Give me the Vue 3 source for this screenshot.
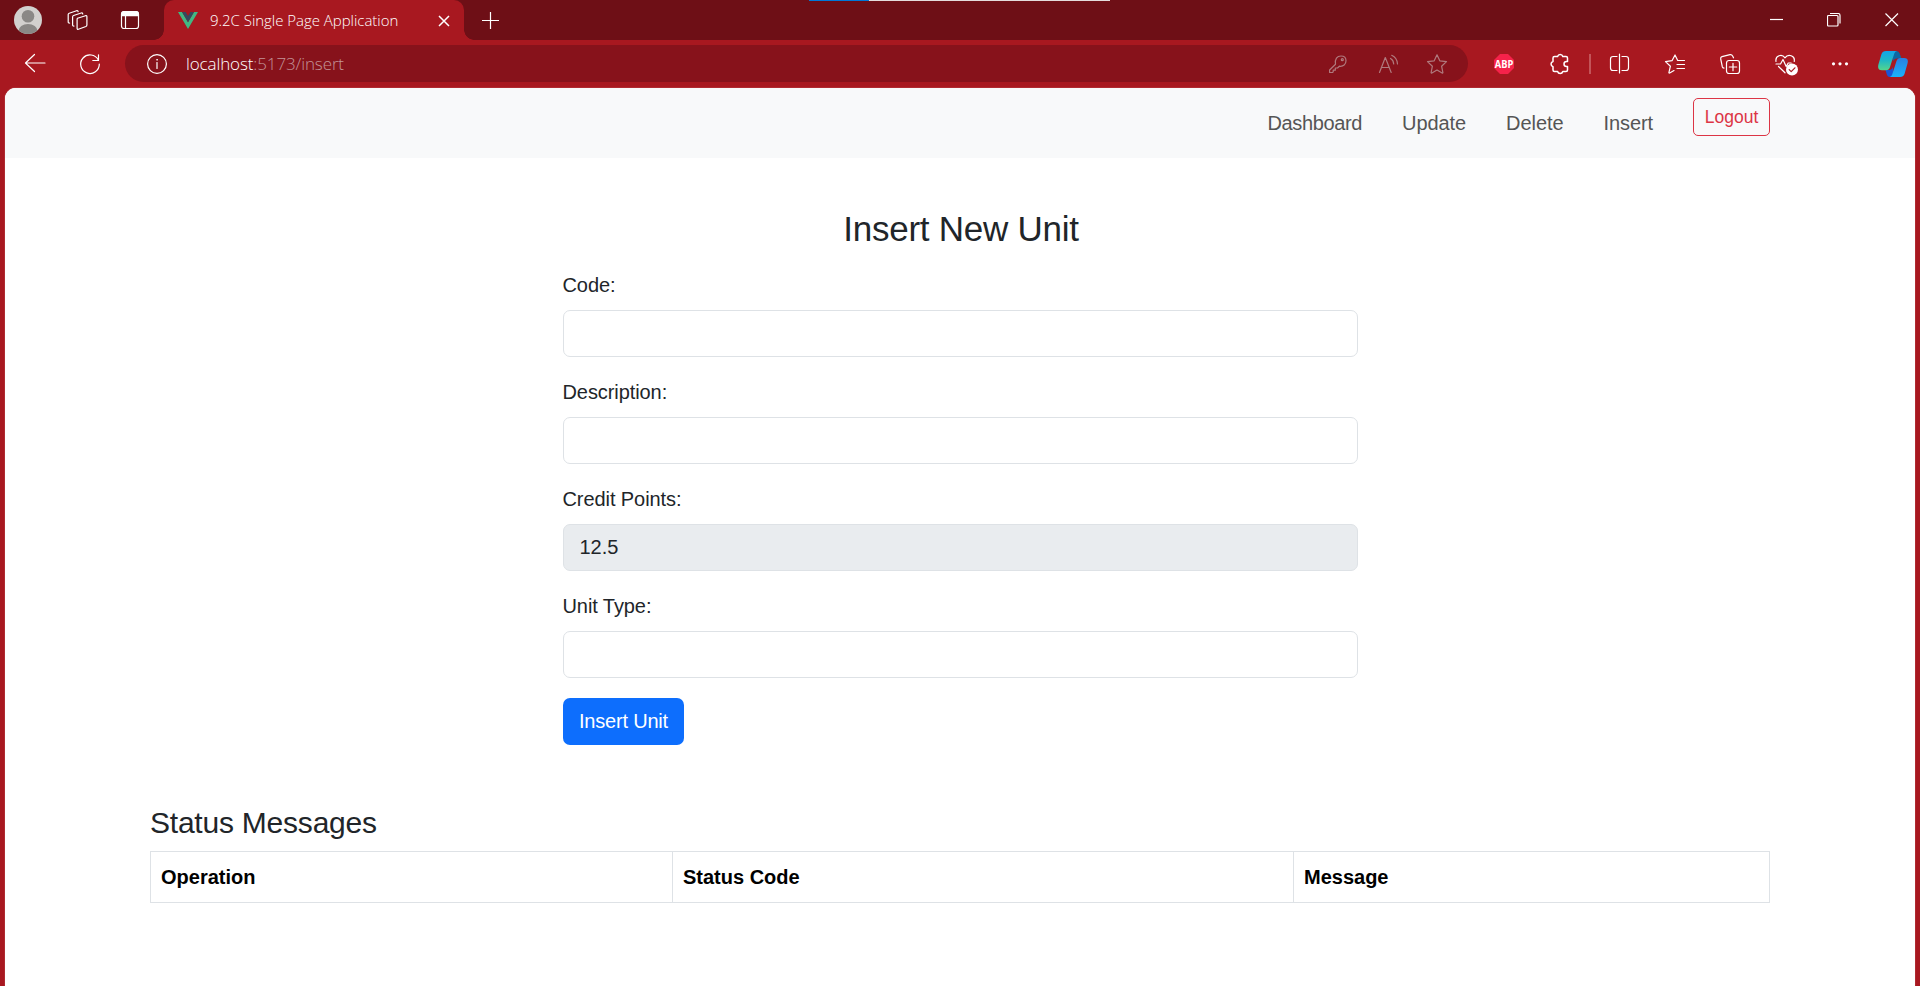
<script setup>
import { ref } from 'vue'

const links = ['Dashboard', 'Update', 'Delete', 'Insert']
const fields = ref([
  { id: 'code', label: 'Code:', value: '', readonly: false },
  { id: 'description', label: 'Description:', value: '', readonly: false },
  { id: 'credit', label: 'Credit Points:', value: '12.5', readonly: true },
  { id: 'type', label: 'Unit Type:', value: '', readonly: false }
])
const columns = ['Operation', 'Status Code', 'Message']
</script>

<template>
  <div class="window">
    <div class="progress"><i></i></div>
    <header class="tabs">
      <svg class="avatar" width="28" height="28" viewBox="0 0 28 28">
        <defs><clipPath id="face"><circle cx="14" cy="14" r="14" /></clipPath></defs>
        <circle cx="14" cy="14" r="14" fill="#d2d0ce" />
        <g clip-path="url(#face)" fill="#8a8886">
          <circle cx="14" cy="10.3" r="6.3" />
          <ellipse cx="14" cy="25" rx="9.5" ry="7" />
        </g>
      </svg>
      <svg class="ic spaces" viewBox="0 0 24 24">
        <path d="M11.500 10.200l8-2.500q1.400-.4 1.400 1v8.400q0 1-1 1.400l-7.500 2.700q-1.300.4-1.300-1v-8.600q0-1 .4-1.400z" />
        <path d="M8 18q-1.400.2-1.400-1V8.900q0-1 1-1.400l7.600-2.500q1.400-.3 1.500 1" />
        <path d="M3.600 15q-1.400.2-1.400-1V6.600q0-1 1-1.400l7.400-2.500q1.300-.3 1.500.9" />
      </svg>
      <svg class="ic actions" viewBox="0 0 24 24">
        <rect x="3.500" y="3.500" width="17" height="17" rx="2.500" />
        <path d="M3 7q0-4 3-4h12q3 0 3 4v1.200H3z" fill="#fff" stroke="none" />
        <path d="M7.500 8v12.500" />
      </svg>
      <div class="tab">
        <svg class="vue" width="20" height="17" viewBox="0 0 20 17">
          <path d="M0 0h4l6 10.300L16 0h4L10 17z" fill="#41b883" />
          <path d="M4 0h3.700L10 4l2.300-4H16l-6 10.300z" fill="#35495e" />
        </svg>
        <span class="title">9.2C Single Page Application</span>
        <svg class="shut" width="12" height="12" viewBox="0 0 12 12"><path d="M1 1l10 10M11 1L1 11" /></svg>
      </div>
      <svg class="plus" width="18" height="18" viewBox="0 0 18 18"><path d="M9.500 1v17M1 9.500h17" /></svg>
      <div class="controls">
        <svg width="14" height="14" viewBox="0 0 14 14"><path d="M1 6.500h13" /></svg>
        <svg width="14" height="14" viewBox="0 0 14 14"><rect x=".5" y="2.500" width="10.500" height="10.500" rx="1" /><path d="M3 .5h8q2 0 2 2v8" /></svg>
        <svg width="14" height="14" viewBox="0 0 14 14"><path d="M.5.500l12.500 12.500M13 .5L.5 13" /></svg>
      </div>
    </header>

    <div class="toolbar">
      <svg class="ic back" viewBox="0 0 24 24"><path d="M22 11H2.500M11.500 2.500l-9 8.500 9 8.500" /></svg>
      <svg class="ic reload" viewBox="0 0 24 24"><path d="M20.300 8A9.300 9.300 0 1 0 21.300 12M20.500 2.800v5.700h-5.700" /></svg>
      <div class="address">
        <svg class="ic info" viewBox="0 0 24 24"><circle cx="12" cy="12" r="9.400" /><path d="M12 10.500v6" /><circle cx="12" cy="7.800" r=".5" fill="#fff" stroke-width=".6" /></svg>
        <span class="url"><b>localhost</b>:5173/insert</span>
        <svg class="ic dim key" viewBox="0 0 24 24"><path d="M9.500 12.200C8.700 7 11 4 15 4c3.300 0 5 2 5 4.800 0 3.500-2.700 6-6.600 5.400L11.500 16H9.300v2.200H7.200v1.600L6.500 20.500H3.600V18z" /><circle cx="16.300" cy="7.700" r="1" /></svg>
        <svg class="ic dim read" viewBox="0 0 24 24"><path d="M2.500 20.500L8.300 5.500l5.900 15M4.700 15.500h7.400M13.500 6.500q3 1.500 3.200 5.500M14.700 3.300q5.500 2.500 5.800 8.700" /></svg>
        <svg class="ic dim star" viewBox="0 0 24 24"><path d="M12 2.800l2.800 6 6.700.8-4.900 4.600 1.300 6.500q-.1.600-.8.300L12 17.900l-5.100 3.100q-.7.300-.8-.3l1.300-6.500-4.900-4.600 6.700-.8z" /></svg>
      </div>
      <svg class="ic abp" viewBox="0 0 24 24">
        <path d="M8 2h8l6 6v8l-6 6H8l-6-6V8z" fill="#f6224a" stroke="none" />
        <text x="12" y="15.700" text-anchor="middle" textLength="18.500" lengthAdjust="spacingAndGlyphs">ABP</text>
      </svg>
      <svg class="ic puzzle" viewBox="0 0 24 24"><path d="M6.500 4.500h3.100a2.700 2.700 0 0 1 5.200 0H18q1.500 0 1.500 1.500v3.500h-1a2.500 2.500 0 0 0 0 5h1V18q0 1.500-1.500 1.500h-3.200a2.700 2.700 0 0 1-5.200 0H6.500Q5 19.500 5 18v-3.300a2.700 2.700 0 0 1 0-5.200V6q0-1.500 1.500-1.500z" /></svg>
      <i class="sep"></i>
      <svg class="ic split" viewBox="0 0 24 24"><path d="M9 4.500H5q-2.500 0-2.500 2.500v9q0 2.500 2.500 2.500h4M14 4.500h4q2.500 0 2.500 2.500v9q0 2.500-2.500 2.500h-4M11.500 2v19" /></svg>
      <svg class="ic favs" viewBox="0 0 24 24"><path d="M16 8.500h-1.300L12 3 9 8.700l-6.500.9 4.900 4.600-1.500 6.500q0 .5.800.3L11 18.600M15 8.500h6.500M14 12.500h7.500M14 16.500h7.500" /></svg>
      <svg class="ic" viewBox="0 0 24 24"><rect x="8.500" y="8.500" width="13" height="13" rx="2.500" /><path d="M15 11.300v7.400M11.300 15h7.400M6 16.200q-1.300-.3-1.700-1.500L2.700 6.800q-.3-1.700 1.300-2.200l8-2q1.800-.3 2.500 1.200l1 2" /></svg>
      <svg class="ic heart" viewBox="0 0 24 24"><path d="M2 9.500C1 3.500 8 1.500 11 5.800 14 1.500 21.500 3.500 20.200 9.500M2 12h4.500L9 7.500l3.200 7 2-3.500h3M4.500 14.500l6.500 6.300" /><circle cx="18" cy="17.500" r="6" fill="#fff" stroke="none" /><path d="M15.200 17.700l2 2 3.700-3.900" stroke="#a81820" /></svg>
      <svg class="ic dots" viewBox="0 0 24 24"><g fill="#fff" stroke="none"><circle cx="5.500" cy="11.800" r="1.600" /><circle cx="12" cy="11.800" r="1.600" /><circle cx="18.500" cy="11.800" r="1.600" /></g></svg>
      <svg class="copilot" width="30" height="28" viewBox="0 0 30 28">
        <defs>
          <linearGradient id="ca" x1="0" y1="0" x2="0" y2="1"><stop offset="0" stop-color="#13a4e8" /><stop offset=".5" stop-color="#20b8c4" /><stop offset="1" stop-color="#55d68c" /></linearGradient>
          <linearGradient id="cb" x1="0" y1="0" x2="0" y2="1"><stop offset="0" stop-color="#2a7fe2" /><stop offset="1" stop-color="#19b2fb" /></linearGradient>
        </defs>
        <path d="M14 1h4.500q2.500 0 3.200 2.500L23.500 8.500H19q-3 0-4 3z" fill="#0c67a4" />
        <path d="M16 27h-4q-2.500 0-3.200-2.500L7.500 20H11q3 0 4-3z" fill="#1b55d5" />
        <path d="M8 1h11q-2 .3-2.700 2.500L12 17q-1 3.300-4 3.300H4Q-1 20.300.4 14.500L3.500 4Q4.500 1 8 1z" fill="url(#ca)" />
        <path d="M22 27H11.500q2-.3 2.700-2.500L18.500 11q1-3 4-3H26q5 0 3.500 5.500L26.500 24q-1 3-4.500 3z" fill="url(#cb)" />
      </svg>
    </div>

    <main class="page">
      <nav class="nav">
        <a v-for="link in links" :key="link">{{ link }}</a>
        <button class="logout">Logout</button>
      </nav>
      <form class="form" @submit.prevent>
        <h2>Insert New Unit</h2>
        <div v-for="field in fields" :key="field.id" class="group">
          <label :for="field.id">{{ field.label }}</label>
          <input :id="field.id" v-model="field.value" :readonly="field.readonly" :class="{ locked: field.readonly }" />
        </div>
        <button class="submit">Insert Unit</button>
      </form>
      <section class="status">
        <h3>Status Messages</h3>
        <table>
          <colgroup><col class="c1" /><col class="c2" /><col /></colgroup>
          <thead><tr><th v-for="column in columns" :key="column">{{ column }}</th></tr></thead>
        </table>
      </section>
    </main>
  </div>
</template>

<style>
body { margin: 0; overflow: hidden; }
</style>

<style scoped>
* { box-sizing: border-box; }
.window { position: relative; width: 1920px; height: 986px; overflow: hidden; display: flex; flex-direction: column; background: #a81820; font-family: "Liberation Sans", Arial, sans-serif; }
.progress { position: absolute; left: 809px; top: 0; width: 301px; height: 1px; background: #e5dcdc; }
.progress i { display: block; width: 60px; height: 1px; background: #0078d7; }
svg { flex: none; display: block; fill: none; stroke: #fff; stroke-width: 1.2; }
.ic { width: 24px; height: 24px; stroke-linejoin: round; stroke-linecap: round; }
.tabs { height: 40px; flex: none; display: flex; align-items: center; background: #6e0f16; }
.avatar { margin-left: 14px; stroke: none; }
.spaces { margin-left: 24px; }
.actions { margin-left: 28px; }
.tab { position: relative; width: 300px; height: 40px; margin-left: 22px; padding: 0 14px; display: flex; align-items: center; background: #a81820; border-radius: 10px 10px 0 0; }
.tab::before, .tab::after { content: ""; position: absolute; bottom: 0; width: 10px; height: 10px; }
.tab::before { left: -10px; background: radial-gradient(circle at 0 0, transparent 9.5px, #a81820 10px); }
.tab::after { right: -10px; background: radial-gradient(circle at 100% 0, transparent 9.5px, #a81820 10px); }
.vue { stroke: none; }
.title { margin-left: 12px; width: 200px; font: 300 15px/20px "Open Sans", "Noto Sans", sans-serif; letter-spacing: -.03px; color: #fff; white-space: nowrap; }
.shut { margin-left: 28px; margin-top: 1px; stroke-width: 1.5; }
.plus { margin-left: 17px; }
.controls { display: flex; gap: 44px; margin-left: auto; margin-right: 21px; }
.toolbar { height: 48px; flex: none; display: flex; align-items: center; }
.back { margin-left: 23px; }
.reload { margin-left: 31px; }
.address { width: 1343px; height: 37px; margin: 0 24px 1px 23px; padding: 0 19px 0 20px; border-radius: 19px; display: flex; align-items: center; background: #87121b; }
.url { margin-left: 17px; font: 300 17px/24px "Open Sans", "Noto Sans", sans-serif; letter-spacing: -.12px; color: #c39498; }
.url b { font-weight: 300; color: #fff; }
.dim { stroke: #b0797d; }
.key { margin-left: auto; }
.read { margin-left: 27px; }
.star { margin-left: 24px; }
.abp text { font: bold 10.5px "Open Sans", sans-serif; fill: #fff; stroke: none; }
.puzzle { margin-left: 32px; stroke-width: 1.5; }
.sep { width: 2px; height: 20px; margin: 0 17px; background: #c35459; }
.favs, .favs + .ic { margin-left: 31px; }
.heart { margin-left: 32px; }
.dots { margin-left: 30px; }
.copilot { margin-left: 26px; stroke: none; }
.page { flex: 1; margin: 0 5px; background: #fff; border-radius: 11px 11px 0 0; overflow: hidden; box-shadow: 0 0 1px #eed5d7; color: #212529; font-size: 20px; line-height: 30px; }
.nav { height: 70px; padding: 10px 145px 0 0; display: flex; justify-content: flex-end; align-items: flex-start; background: #f8f9fa; }
.nav a { margin: 10px 40px 0 0; color: #555; letter-spacing: -.08px; }
.nav a:first-child { letter-spacing: -.35px; }
button { font-family: inherit; }
.logout { width: 77px; height: 38px; padding: 0; border: 1px solid #dc3545; border-radius: 5px; background: transparent; color: #dc3545; font-size: 17.5px; }
.form { width: 795px; margin: 50px auto 0; }
h2, h3 { margin: 0; font-weight: 400; }
h2 { height: 42px; margin-bottom: 20px; padding-left: 2px; text-align: center; font-size: 35px; line-height: 42px; letter-spacing: -.25px; white-space: nowrap; }
.group { margin-bottom: 20px; }
label { display: block; height: 30px; margin-bottom: 10px; letter-spacing: -.08px; }
input { display: block; width: 100%; height: 47px; padding: 0 16px; border: 1px solid #dee2e6; border-radius: 7px; outline: 0; font: inherit; color: #212529; background: #fff; }
.locked { background: #e9ecef; }
.submit { display: block; width: 121px; height: 47px; padding: 0 0 0 1px; border: 0; border-radius: 7px; background: #0d6efd; color: #fff; font-size: 20px; letter-spacing: -.2px; }
.status { width: 1620px; margin: 60px auto 0; }
h3 { height: 36px; margin-bottom: 10px; font-size: 30px; line-height: 36px; letter-spacing: -.22px; }
table { width: 1620px; table-layout: fixed; border-collapse: collapse; }
.c1 { width: 522px; }
.c2 { width: 621px; }
th { height: 51px; padding: 0 10px; border: 1px solid #dee2e6; text-align: left; color: #000; }
</style>
